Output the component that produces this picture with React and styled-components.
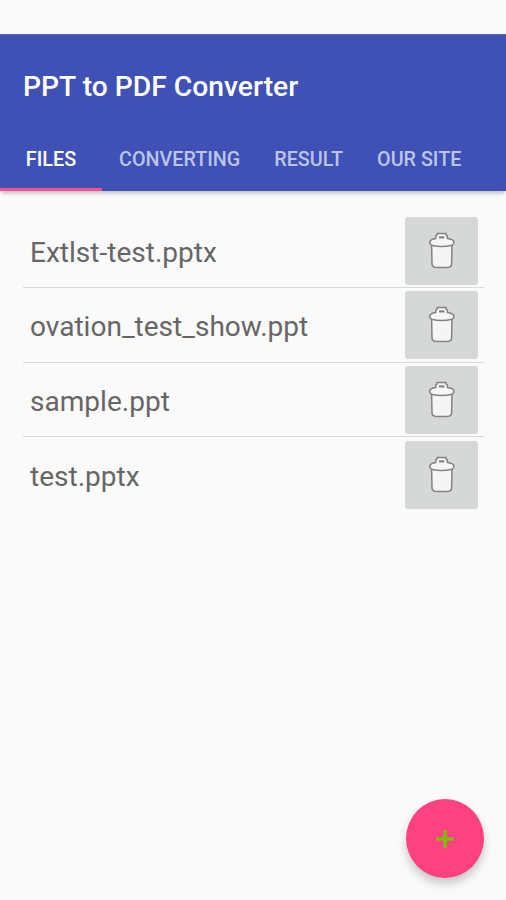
import { useState } from "react";
import styled, { createGlobalStyle } from "styled-components";

const GlobalStyle = createGlobalStyle`
  * {
    box-sizing: border-box;
  }

  body {
    margin: 0;
    background-color: #fafafa;
    font-family: Roboto, "Liberation Sans", sans-serif;
  }
`;

const Container = styled.div`
  width: 100%;
  height: 100vh;
  display: flex;
  flex-direction: column;
  overflow: hidden;
  background-color: #fafafa;
`;

const StatusBar = styled.div`
  flex: none;
  height: 34px;
`;

const Header = styled.header`
  flex: none;
  height: 157px;
  display: flex;
  flex-direction: column;
  justify-content: space-between;
  border-top: 1px solid #5565b9;
  background-color: #3f51b5;
  box-shadow: 0 3px 4px -1px rgba(0, 0, 0, 0.25);
`;

const Title = styled.h1`
  margin: 0;
  padding: 33px 23px 0;
  font-size: 28.25px;
  line-height: 38px;
  font-weight: 500;
  color: #ffffff;
`;

const Tabs = styled.nav`
  height: 67px;
  display: flex;
`;

const Tab = styled.button`
  min-width: 102px;
  padding: 6px 17px 0;
  border: none;
  border-bottom: 3px solid ${(props) => (props.$active ? "#f9508f" : "transparent")};
  background-color: transparent;
  font-family: inherit;
  font-size: 19.75px;
  font-weight: 500;
  white-space: nowrap;
  color: ${(props) => (props.$active ? "#ffffff" : "#bdc4ea")};
  cursor: pointer;
`;

const List = styled.ul`
  margin: 0;
  padding: 22.5px 22px 0 23px;
  list-style: none;
`;

const Row = styled.li`
  height: 74.6px;
  display: flex;
  align-items: center;
  justify-content: space-between;
  padding: 3px 6px 2px 7px;
  border-bottom: 1px solid #d9d9d9;

  &:last-child {
    border-bottom-color: transparent;
  }
`;

const FileName = styled.span`
  padding-top: 4px;
  font-size: 28.05px;
  line-height: 36px;
  color: #666666;
`;

const DeleteButton = styled.button`
  width: 73px;
  height: 68px;
  display: flex;
  align-items: center;
  justify-content: center;
  padding: 0;
  border: none;
  border-radius: 3px;
  background-color: #d6d7d7;
  cursor: pointer;
`;

const AddButton = styled.button`
  position: fixed;
  right: 22px;
  bottom: 22px;
  width: 78px;
  height: 79px;
  display: flex;
  align-items: center;
  justify-content: center;
  padding: 0;
  border: none;
  border-radius: 50%;
  background-color: #ff4081;
  box-shadow: 0 6px 10px rgba(0, 0, 0, 0.2);
  cursor: pointer;
`;

const TrashIcon = () => (
  <svg width="28" height="38" viewBox="0 0 28 38" fill="#f5f5f5" stroke="#828282" strokeWidth="1.5">
    <path d="M3.6 12 L4 32.2 Q4.2 34.8 7 35.2 Q13.8 35.9 20.6 35.2 Q23.4 34.8 23.6 32.2 L24 12 Z" />
    <path d="M7.8 6.4 V4 Q7.8 3.2 9.2 2.9 V1.4 H18 V2.9 Q19.4 3.2 19.4 4 V6.4 Q25.4 7.2 26 10 Q26.2 12.2 24 13.2 Q19 14.4 13.8 14.4 Q8.4 14.4 3.6 13.2 Q1.4 12.2 1.6 10 Q2.2 7.2 7.8 6.4 Z" />
    <path d="M11 5.4 H16.4" strokeWidth="2.2" />
  </svg>
);

const PlusIcon = () => (
  <svg width="20" height="20" viewBox="0 0 20 20" fill="none" stroke="#80b80c" strokeWidth="3.6">
    <path d="M10 1 V19 M1 10 H19" />
  </svg>
);

const tabs = ["FILES", "CONVERTING", "RESULT", "OUR SITE"];

const initialFiles = ["Extlst-test.pptx", "ovation_test_show.ppt", "sample.ppt", "test.pptx"];

const App = () => {
  const [activeTab, setActiveTab] = useState("FILES");
  const [files, setFiles] = useState(initialFiles);

  const handleDelete = (name) => {
    setFiles(files.filter((file) => file !== name));
  };

  return (
    <Container>
      <GlobalStyle />
      <StatusBar />
      <Header>
        <Title>PPT to PDF Converter</Title>
        <Tabs>
          {tabs.map((tab) => (
            <Tab key={tab} $active={tab === activeTab} onClick={() => setActiveTab(tab)}>
              {tab}
            </Tab>
          ))}
        </Tabs>
      </Header>
      {activeTab === "FILES" && (
        <List>
          {files.map((file) => (
            <Row key={file}>
              <FileName>{file}</FileName>
              <DeleteButton aria-label="Delete" onClick={() => handleDelete(file)}>
                <TrashIcon />
              </DeleteButton>
            </Row>
          ))}
        </List>
      )}
      <AddButton aria-label="Add">
        <PlusIcon />
      </AddButton>
    </Container>
  );
};

export default App;
